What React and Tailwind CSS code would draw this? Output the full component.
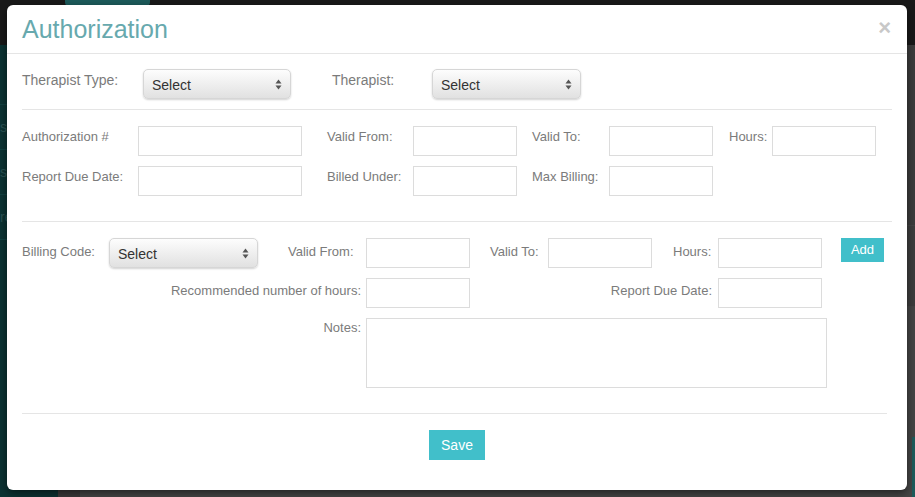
import React from "react";

const Label = ({ children, className = "" }) => (
    <div className={`text-[13px] leading-[18px] text-[#7b7b7b] ${className}`}>{children}</div>
);

const Input = ({ className = "" }) => (
    <div className={`h-[30px] border border-[#dcdcdc] bg-white ${className}`} />
);

const Select = ({ className = "" }) => (
    <div
        className={`h-[30px] flex items-center justify-between pl-[8px] pr-[8px] rounded-[5px] border border-[#d6d6d6] bg-gradient-to-b from-[#fdfdfd] to-[#e1e1e1] shadow-[0_1px_2px_rgba(0,0,0,0.18)] ${className}`}
    >
        <span className="text-[14px] text-[#333] pt-[2px]">Select</span>
        <svg width="7" height="11" viewBox="0 0 7 11">
            <path d="M3.5 0.5 L6.5 4.5 L0.5 4.5 Z" fill="#555" />
            <path d="M3.5 10.5 L6.5 6.5 L0.5 6.5 Z" fill="#555" />
        </svg>
    </div>
);

export default function App() {
    return (
        <div
            className="relative h-[497px] w-full overflow-hidden bg-[#454545]"
            style={{ fontFamily: '"Liberation Sans", Arial, sans-serif' }}
        >
            {/* page behind the overlay */}
            <div className="h-[45px] bg-[#191919] flex">
                <div className="ml-[65px] w-[85px] h-[6px] rounded-b-[4px] bg-[#1d5b5b]" />
            </div>
            <div className="flex h-[452px]">
                <div className="w-[58px] bg-[#0c3333] flex flex-col text-[14px] text-[#2a5252]">
                    <div className="h-[60px] border-b border-[#124040]" />
                    <div className="h-[45px] border-b border-[#124040] pt-[12px]">st</div>
                    <div className="h-[45px] border-b border-[#124040] pt-[12px]">s</div>
                    <div className="h-[45px] border-b border-[#124040] pt-[12px]">re</div>
                </div>
                <div className="w-[22px] bg-[#3a3a3a]" />
                <div className="flex-1 flex flex-col">
                    <div className="h-[200px] bg-[#3c3c3c] border-b border-[#444]" />
                    <div className="h-[90px] bg-[#3d3d3d] border-b border-[#444]" />
                    <div className="flex-1 flex justify-end">
                        <div className="w-[3px] h-[60px] mt-[130px] bg-[#1d5b5b]" />
                    </div>
                </div>
            </div>

            {/* modal */}
            <div className="absolute left-[7px] top-[5px] w-[900px] h-[485px] bg-white rounded-[6px] shadow-[0_3px_9px_rgba(0,0,0,0.5)] flex flex-col">
                <div className="h-[49px] border-b border-[#e5e5e5] px-[15px] flex items-center justify-between">
                    <h1 className="text-[25px] leading-[30px] text-[#67a9ae] pb-[1px]">Authorization</h1>
                    <span className="text-[22px] leading-none font-bold text-[#c8c8c8] mr-[1px] pb-[2px]">×</span>
                </div>

                <div className="px-[15px]">
                    {/* therapist */}
                    <div className="mt-[15px] flex items-start">
                        <div className="w-[121px] pt-[1px] text-[14px] leading-[20px] text-[#7b7b7b]">Therapist Type:</div>
                        <Select className="w-[148px]" />
                        <div className="ml-[41px] w-[100px] pt-[1px] text-[14px] leading-[20px] text-[#7b7b7b]">Therapist:</div>
                        <Select className="w-[149px]" />
                    </div>

                    <div className="mt-[10px] border-t border-[#e5e5e5]" />

                    {/* authorization */}
                    <div className="mt-[16px] flex items-start">
                        <Label className="w-[116px] pt-[2px]">Authorization #</Label>
                        <Input className="w-[164px]" />
                        <Label className="ml-[25px] w-[86px] pt-[2px]">Valid From:</Label>
                        <Input className="w-[104px]" />
                        <Label className="ml-[15px] w-[77px] pt-[2px]">Valid To:</Label>
                        <Input className="w-[104px]" />
                        <Label className="ml-[16px] w-[43px] pt-[2px]">Hours:</Label>
                        <Input className="w-[104px]" />
                    </div>
                    <div className="mt-[10px] flex items-start">
                        <Label className="w-[116px] pt-[2px]">Report Due Date:</Label>
                        <Input className="w-[164px]" />
                        <Label className="ml-[25px] w-[86px] pt-[2px]">Billed Under:</Label>
                        <Input className="w-[104px]" />
                        <Label className="ml-[15px] w-[77px] pt-[2px]">Max Billing:</Label>
                        <Input className="w-[104px]" />
                    </div>

                    <div className="mt-[25px] border-t border-[#e5e5e5]" />

                    {/* billing code */}
                    <div className="mt-[16px] flex items-start">
                        <Label className="w-[87px] pt-[5px]">Billing Code:</Label>
                        <Select className="w-[149px]" />
                        <Label className="ml-[30px] w-[78px] pt-[5px]">Valid From:</Label>
                        <Input className="w-[104px]" />
                        <Label className="ml-[20px] w-[58px] pt-[5px]">Valid To:</Label>
                        <Input className="w-[104px]" />
                        <Label className="ml-[21px] w-[45px] pt-[5px]">Hours:</Label>
                        <Input className="w-[104px]" />
                        <button className="ml-[19px] w-[43px] h-[24px] bg-[#41bfca] text-white text-[13px]">Add</button>
                    </div>
                    <div className="mt-[10px] flex items-start">
                        <Label className="w-[344px] pr-[5px] pt-[4px] text-right">Recommended number of hours:</Label>
                        <Input className="w-[104px]" />
                        <Label className="w-[248px] pr-[6px] pt-[4px] text-right">Report Due Date:</Label>
                        <Input className="w-[104px]" />
                    </div>
                    <div className="mt-[10px] flex items-start">
                        <Label className="w-[344px] pr-[5px] pt-[1px] text-right">Notes:</Label>
                        <div className="w-[461px] h-[70px] border border-[#dcdcdc]" />
                    </div>

                    <div className="mt-[25px] mr-[5px] border-t border-[#e5e5e5]" />

                    <div className="mt-[16px] flex justify-center">
                        <button className="w-[56px] h-[30px] bg-[#41bfca] text-white text-[14px]">Save</button>
                    </div>
                </div>
            </div>
        </div>
    );
}
